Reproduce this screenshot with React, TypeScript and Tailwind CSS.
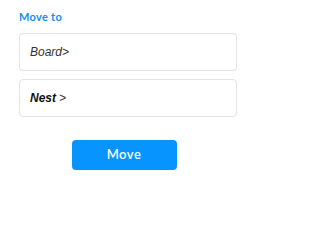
import React from "react";

export default function App() {
  return (
    <div className="w-[248px] h-[203px] bg-white pt-[10px] pl-[19px] pr-[11px] font-['Lato',sans-serif]">
      <div className="text-[11px] leading-[14px] font-bold text-[#0f8ff0] tracking-[0.3px]">Move to</div>
      <div className="mt-[9px] h-[38px] rounded-[4px] border border-[#e3e3e3] flex items-center pl-[10px] text-[12px] italic text-[#333] font-['Liberation_Sans',sans-serif]">
        Board&gt;
      </div>
      <div className="mt-[8px] h-[38px] rounded-[4px] border border-[#e3e3e3] flex items-center pl-[10px] text-[12px] italic text-[#333] font-['Liberation_Sans',sans-serif]">
        <span className="font-bold text-[#111] mr-[3px]">Nest</span>&gt;
      </div>
      <div className="flex justify-center mt-[23px] pr-[8px]">
        <button className="w-[105px] h-[30px] rounded-[4px] bg-[#0894ff] text-white text-[13px] font-semibold tracking-[0.5px]">
          Move
        </button>
      </div>
    </div>
  );
}
